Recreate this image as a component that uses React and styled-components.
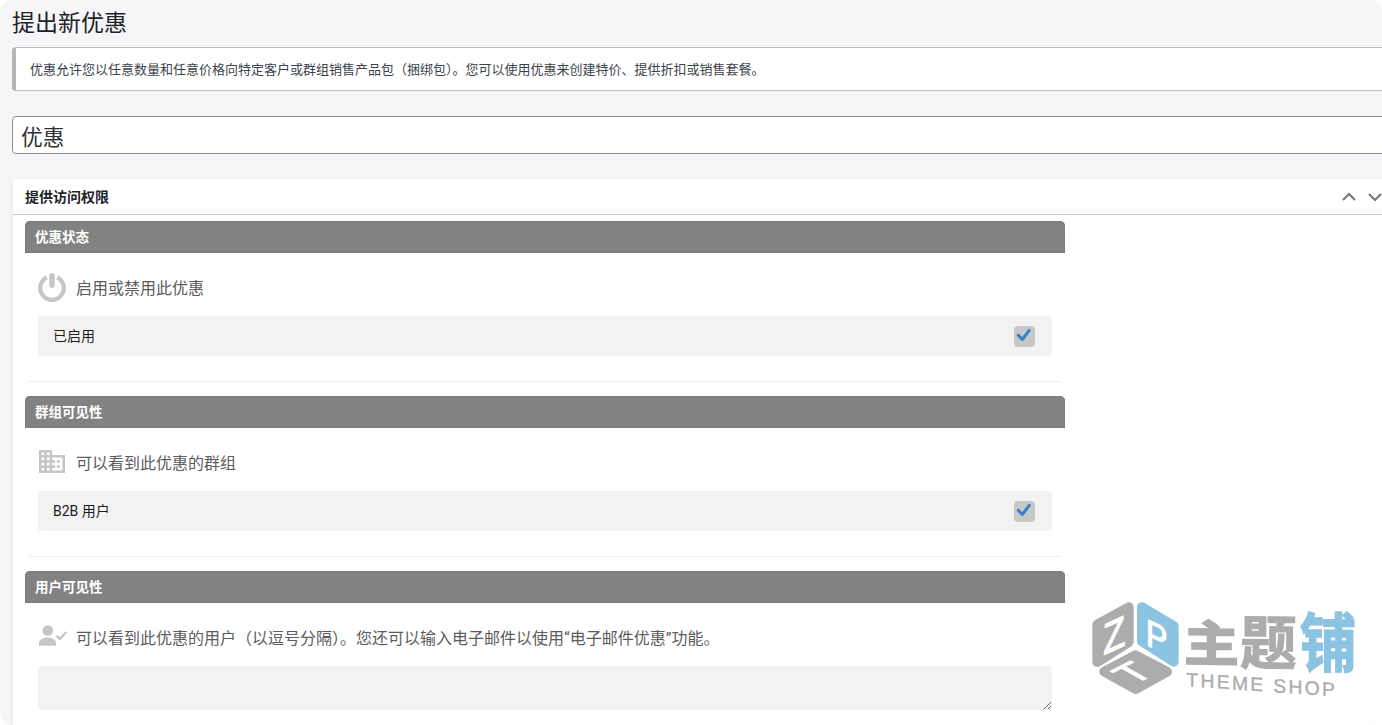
import React from "react";
import styled, { createGlobalStyle } from "styled-components";

const GlobalStyle = createGlobalStyle`
  *, *::before, *::after { box-sizing: border-box; }
  html, body { margin: 0; background: #fff; overflow: hidden; }
  body { font-family: Roboto, "Noto Sans CJK SC", sans-serif; }
`;

const Page = styled.main`
  position: relative;
  width: 1382px;
  height: 725px;
  overflow: hidden;
  border-radius: 12px;
  background: #f6f6f9;
  padding-left: 12px;
  display: flex;
  flex-direction: column;
  align-items: flex-start;
`;

const PageTitle = styled.h1`
  margin: 0;
  height: 47px;
  flex-shrink: 0;
  line-height: 48px;
  font-size: 23px;
  font-weight: 400;
  color: #1d2327;
`;

const Notice = styled.p`
  margin: 0;
  width: 1400px;
  height: 44px;
  flex-shrink: 0;
  padding-left: 14px;
  border: 1px solid #bfc0c2;
  border-left: 4px solid #b4b5b7;
  border-radius: 4px;
  background: #fff;
  line-height: 43px;
  font-size: 13px;
  color: #3c434a;
`;

const TitleField = styled.input`
  margin: 25px 0 0;
  width: 1400px;
  height: 38px;
  flex-shrink: 0;
  padding: 0 8px;
  border: 1px solid #8c8f94;
  border-radius: 4px;
  background: #fff;
  font-family: inherit;
  font-size: 21.7px;
  line-height: 34px;
  color: #2c3338;
  outline: none;
`;

const Panel = styled.section`
  margin: 25px 0 0 1px;
  width: 1400px;
  flex: 1;
  min-height: 0;
  background: #fff;
  box-shadow: 0 -1px 0 #efeff1, -3px 0 0 #f1f1f3;
`;

const PanelHeader = styled.header`
  display: flex;
  align-items: center;
  height: 36px;
  padding-left: 12px;
  border-bottom: 1px solid #c3c4c7;
`;

const PanelTitle = styled.h2`
  margin: 0;
  width: 1317.4px;
  flex-shrink: 0;
  font-size: 14px;
  font-weight: 600;
  line-height: 20px;
  color: #1d2327;
`;

const PanelControls = styled.div`
  display: flex;
  gap: 12px;
`;

const PanelBody = styled.div`
  width: 1052px;
  padding: 6px 0 0 12px;
`;

const Section = styled.section`
  height: 175px;
`;

const SectionBar = styled.h3`
  margin: 0;
  height: 32px;
  padding-left: 10px;
  border-radius: 5px 5px 0 0;
  background: #828282;
  box-shadow: inset 0 0 0 1px #7b7b7b;
  font-size: 13.5px;
  font-weight: 700;
  line-height: 32px;
  color: #fff;
`;

const SectionContent = styled.div`
  margin: 0 4px 0 3px;
  height: 129px;
  padding: 15px 9px 0 10px;
  border-bottom: 1px solid #eeeeee;
`;

const Prompt = styled.div`
  display: flex;
  align-items: center;
  gap: 10px;
  height: 40px;
  font-size: 16px;
  color: #5c5c5c;
`;

const IconSlot = styled.span`
  display: flex;
  width: 28px;
  height: 34px;
  flex-shrink: 0;
`;

const Caption = styled.span`
  padding-bottom: 2px;
`;

const Option = styled.label`
  display: flex;
  align-items: center;
  justify-content: space-between;
  margin-top: 8px;
  height: 40px;
  padding: 0 16.6px 0 15px;
  border-radius: 4px;
  background: #f2f2f2;
  font-size: 14px;
  color: #1d1d1d;
`;

const CheckBox = styled.span`
  display: flex;
  width: 21px;
  height: 21px;
  border-radius: 4px;
  background: #c7c8c8;
`;

const UserList = styled.textarea`
  display: block;
  margin: 8px 0 0;
  width: 100%;
  height: 44px;
  border: 0;
  border-radius: 4px;
  background: #f2f2f2;
  resize: vertical;
  outline: none;
`;

const Watermark = styled.svg`
  position: absolute;
  left: 1080px;
  top: 590px;
`;

const PowerIcon = () => (
  <svg width="28" height="34" viewBox="0 0 28 34" fill="none" stroke="#c6c6c6">
    <path d="M8.8 6.4A11.8 11.8 0 1 0 19.2 6.4" strokeWidth="4.2" />
    <path d="M14 4.6V14.2" strokeWidth="5.4" strokeLinecap="round" />
  </svg>
);

const BuildingIcon = () => (
  <svg width="28" height="34" viewBox="0 1 28 34">
    <path
      fill="#c6c6c6"
      fillRule="evenodd"
      d="M1 5H14V10H27V28H1ZM3.5 7.5V10H6.2V7.5ZM9 7.5V10H11.7V7.5ZM3.5 12.5V15.3H6.2V12.5ZM9 12.5V15.3H11.7V12.5ZM3.5 17.7V20.5H6.2V17.7ZM9 17.7V20.5H11.7V17.7ZM3.5 23V25.5H6.2V23ZM9 23V25.5H11.7V23ZM14 12.5V15H17V17.8H14V20.2H17V23H14V25.5H24.5V12.5ZM19 15H21.8V17.8H19ZM19 20.2H21.8V23H19Z"
    />
  </svg>
);

const UserCheckIcon = () => (
  <svg width="29" height="34" viewBox="0 0.3 29 34" style={{ overflow: "visible" }}>
    <circle cx="9.8" cy="9.8" r="5.3" fill="#c6c6c6" />
    <path d="M1 25V22.5C1 18.7 6 16.8 9.5 16.8S18 18.7 18 22.5V25Z" fill="#c6c6c6" />
    <path d="M18.6 14.8L21.8 18.2L28.3 11.3" fill="none" stroke="#c6c6c6" strokeWidth="2.5" />
  </svg>
);

const Chevron = ({ down }) => (
  <svg width="14" height="10" viewBox="0 0 14 10" fill="none" stroke="#787c82" strokeWidth="2.2">
    <path d={down ? "M1 2L7 8L13 2" : "M1 8L7 2L13 8"} />
  </svg>
);

const CheckMark = () => (
  <svg width="21" height="21" viewBox="0 0 21 21" fill="none" stroke="#3582c4" strokeWidth="3">
    <path d="M4.3 9.2L8.3 13.5L15.3 4.4" strokeLinecap="round" strokeLinejoin="round" />
  </svg>
);

const Brand = () => (
  <Watermark width="300" height="120" viewBox="0 0 900 360">
    <g strokeWidth="30" strokeLinejoin="round">
      <path d="M146 52L52 104V216L146 156Z" fill="#acacac" stroke="#acacac" />
      <path d="M186 52L281 108V215L186 154Z" fill="#8bc3e2" stroke="#8bc3e2" />
      <path d="M166 196L261 245L168 297L73 245Z" fill="#acacac" stroke="#acacac" />
    </g>
    <g fill="#fff" stroke="#fff" strokeWidth="3" fontFamily="Liberation Sans, sans-serif" fontSize="100">
      <text transform="matrix(1.09 -.5 .02 1.3 70 196)">Z</text>
      <text transform="matrix(.98 .45 0 1.13 197 164)">P</text>
      <text transform="matrix(1.08 -.56 1.06 .58 161 285)">T</text>
    </g>
    <g fill="#acacac" stroke="#acacac" fontFamily="Noto Sans CJK SC, sans-serif" fontSize="100" fontWeight="700">
      <text transform="matrix(1.63 .02 0 1.46 313 213)" strokeWidth="4">主</text>
      <text transform="matrix(1.7 .02 0 1.76 480 222)" strokeWidth="2">题</text>
      <text transform="matrix(1.7 .02 0 1.93 659 229)" fill="#8bc3e2" stroke="#8bc3e2" strokeWidth="2.4">铺</text>
    </g>
    <text
      transform="matrix(1 .067 0 1 319 289)"
      fill="#acacac"
      stroke="#acacac"
      strokeWidth="1"
      fontFamily="Liberation Sans, sans-serif"
      fontSize="58"
      textLength="446"
    >
      THEME SHOP
    </text>
  </Watermark>
);

const OfferSection = ({ title, icon, prompt, children }) => (
  <Section>
    <SectionBar>{title}</SectionBar>
    <SectionContent>
      <Prompt>
        <IconSlot>{icon}</IconSlot>
        <Caption>{prompt}</Caption>
      </Prompt>
      {children}
    </SectionContent>
  </Section>
);

const CheckedOption = ({ children }) => (
  <Option>
    <Caption>{children}</Caption>
    <CheckBox>
      <CheckMark />
    </CheckBox>
  </Option>
);

export default function App() {
  return (
    <>
      <GlobalStyle />
      <Page lang="zh-CN">
        <PageTitle>提出新优惠</PageTitle>
        <Notice>
          优惠允许您以任意数量和任意价格向特定客户或群组销售产品包（捆绑包）。您可以使用优惠来创建特价、提供折扣或销售套餐。
        </Notice>
        <TitleField defaultValue="优惠" />
        <Panel>
          <PanelHeader>
            <PanelTitle>提供访问权限</PanelTitle>
            <PanelControls>
              <Chevron />
              <Chevron down />
            </PanelControls>
          </PanelHeader>
          <PanelBody>
            <OfferSection title="优惠状态" icon={<PowerIcon />} prompt="启用或禁用此优惠">
              <CheckedOption>已启用</CheckedOption>
            </OfferSection>
            <OfferSection title="群组可见性" icon={<BuildingIcon />} prompt="可以看到此优惠的群组">
              <CheckedOption>B2B 用户</CheckedOption>
            </OfferSection>
            <OfferSection
              title="用户可见性"
              icon={<UserCheckIcon />}
              prompt="可以看到此优惠的用户（以逗号分隔）。您还可以输入电子邮件以使用“电子邮件优惠”功能。"
            >
              <UserList />
            </OfferSection>
          </PanelBody>
        </Panel>
        <Brand />
      </Page>
    </>
  );
}
